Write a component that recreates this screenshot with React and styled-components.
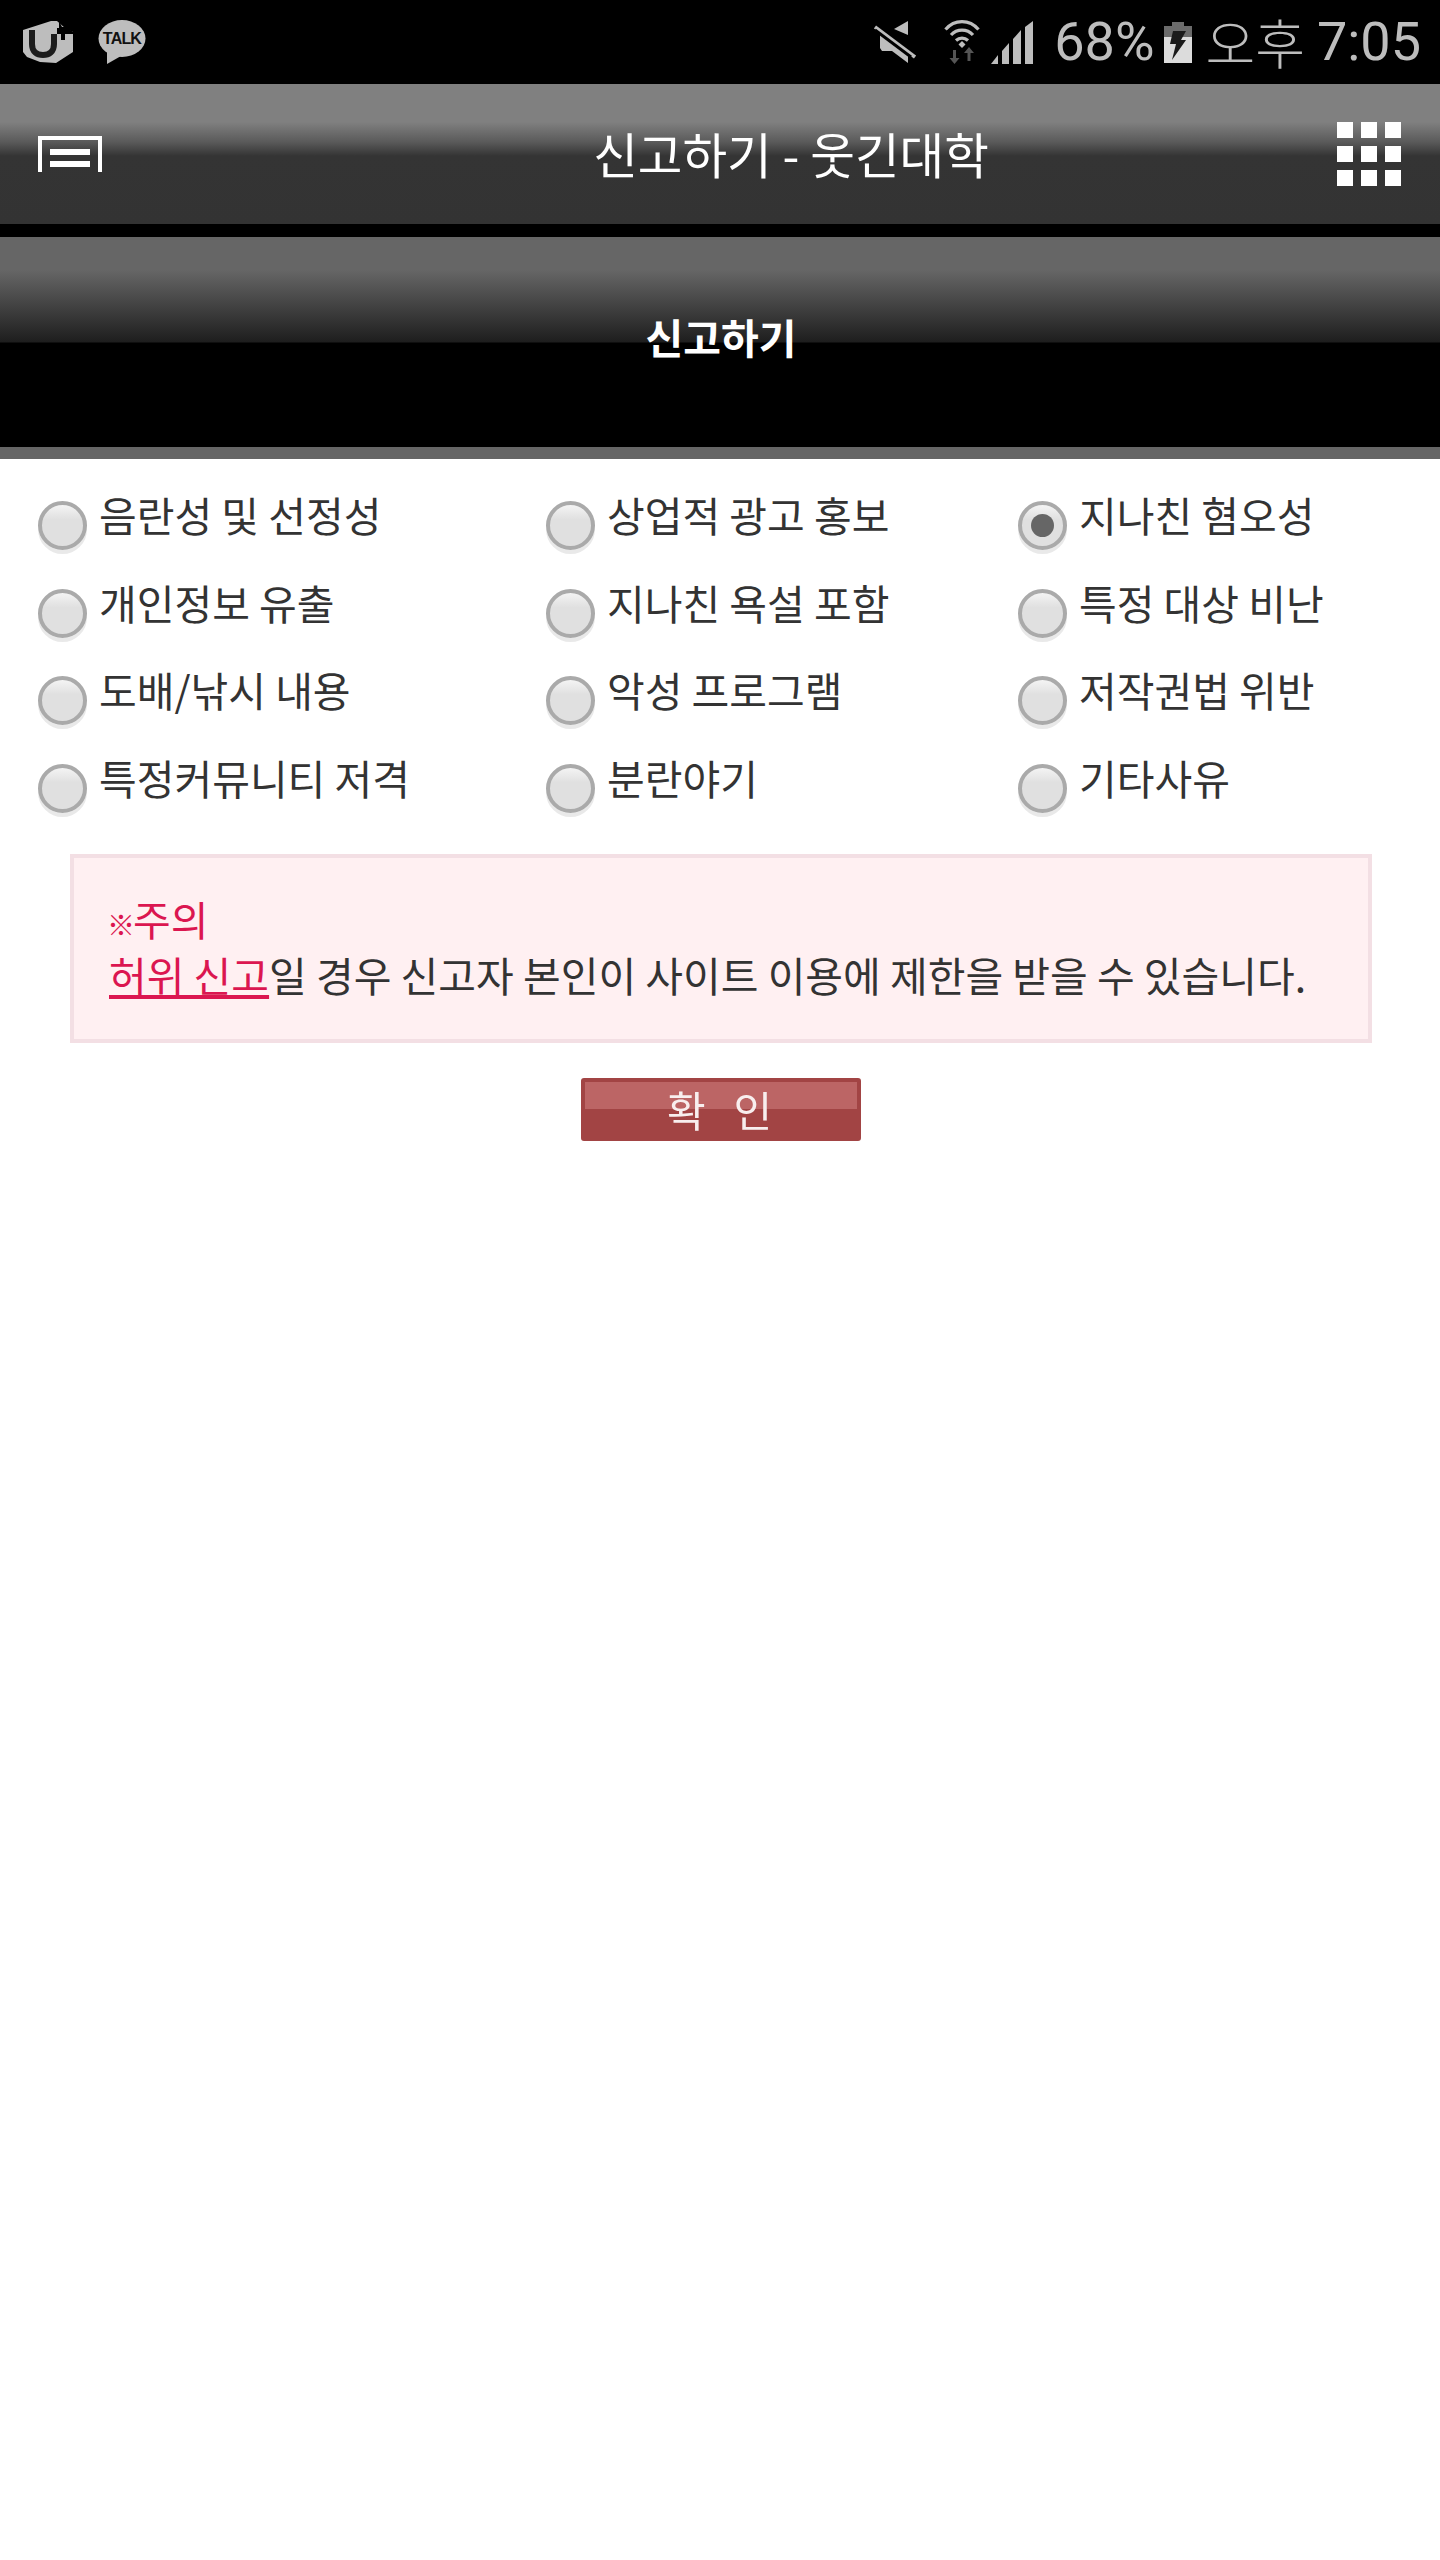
import React from 'react';
import styled, { createGlobalStyle } from 'styled-components';

const KR = `"Noto Sans CJK KR", "Noto Sans", sans-serif`;

const GlobalStyle = createGlobalStyle`
  html, body { margin: 0; padding: 0; background: #fff; }
  body { font-family: ${KR}; color: #333; }
`;

const Page = styled.div`
  width: 1440px;
  min-height: 2560px;
  background: #fff;
`;

const StatusBar = styled.div`
  height: 84px;
  background: #000;
  display: flex;
  align-items: center;
  justify-content: space-between;
  padding: 0 19px 0 23px;
  box-sizing: border-box;
  color: #bdbdbd;
`;

const StatusGroup = styled.div`
  display: flex;
  align-items: center;
  gap: ${props => props.gap || 0}px;
`;

const Spacer = styled.span`
  width: ${props => props.size}px;
`;

const StatusText = styled.span`
  font-family: ${props => (props.kr ? KR : 'Roboto, sans-serif')};
  font-weight: ${props => (props.kr ? 300 : 400)};
  font-size: 54px;
  line-height: 84px;
  margin-left: ${props => props.left || 0}px;
  white-space: nowrap;
`;

const TopBars = styled.div`
  background: #000;
`;

const AppHeader = styled.header`
  height: 140px;
  display: flex;
  align-items: center;
  padding: 0 39px 0 38px;
  box-sizing: border-box;
  background: linear-gradient(to bottom, #808080 0, #808080 38px, #5a5a5a 58px, #343434 72px, #333 140px);
`;

const HeaderTitle = styled.h1`
  flex: 1;
  margin: 0 0 2px;
  padding-left: 143px;
  text-align: center;
  color: #fff;
  font-size: 48.500px;
  font-weight: 400;
  line-height: 60px;
  white-space: nowrap;
`;

const GridIcon = styled.div`
  display: grid;
  grid-template-columns: repeat(3, 16px);
  grid-auto-rows: 16px;
  gap: 8px 8px;
`;

const GridDot = styled.span`
  background: #fff;
`;

const SubHeader = styled.div`
  margin-top: 13px;
  height: 222px;
  box-sizing: border-box;
  border-bottom: 12px solid #666;
  display: flex;
  align-items: center;
  justify-content: center;
  background: linear-gradient(to bottom, #666 0, #666 33px, #1e1e1e 105px, #000 106px, #000 100%);
`;

const SubTitle = styled.h2`
  margin: 0 0 12px 2px;
  color: #fff;
  font-size: 41px;
  font-weight: 700;
  line-height: 60px;
`;

const ReportForm = styled.form`
  margin: 0;
  padding: 42px 0 0 38px;
`;

const OptionGrid = styled.div`
  display: grid;
  grid-template-columns: 508px 472px 1fr;
  grid-auto-rows: 87.500px;
`;

const Option = styled.label`
  display: flex;
  align-items: flex-start;
  gap: 12px;
`;

const Radio = styled.span`
  flex: none;
  width: 49px;
  height: 49px;
  box-sizing: border-box;
  border: 4px solid #aaa;
  border-radius: 50%;
  display: flex;
  align-items: center;
  justify-content: center;
  background: linear-gradient(to bottom, #f4f4f4 0, #e0e0e0 35%, #e0e0e0 100%);
  box-shadow: 0 4px 0 #e9e9e9;
`;

const RadioDot = styled.span`
  width: 23px;
  height: 23px;
  border-radius: 50%;
  background: #666;
`;

const OptionLabel = styled.span`
  font-size: 41px;
  line-height: 50px;
  margin-top: -12px;
  color: #333;
  white-space: nowrap;
`;

const Notice = styled.div`
  margin: 3px 0 0 32px;
  width: 1302px;
  height: 189px;
  box-sizing: border-box;
  padding: 32px 35px 0;
  border: 4px solid #f3dfe4;
  background: #fff0f2;
  font-size: 41px;
  line-height: 56px;
  color: #333;
  white-space: nowrap;
`;

const Warning = styled.div`
  color: #db1650;
`;

const WarningMark = styled.span`
  font-size: 28px;
  font-weight: 700;
  line-height: 1;
  margin-left: -2px;
  margin-right: -2px;
`;

const Mark = styled.span`
  color: #db1650;
  text-decoration: underline;
  text-decoration-thickness: 4px;
  text-underline-offset: 3px;
`;

const ConfirmRow = styled.div`
  display: flex;
  justify-content: center;
  margin: 35px 0 0 -36px;
`;

const ConfirmButton = styled.button`
  width: 280px;
  height: 63px;
  padding: 0 0 2px;
  border: 4px solid #a24444;
  border-radius: 3px;
  box-sizing: border-box;
  background: linear-gradient(to bottom, #bc6565 0, #bc6565 27px, #a24444 27px, #a24444 100%);
  color: #f8eeee;
  font-family: ${KR};
  font-size: 42px;
  font-weight: 400;
  line-height: 50px;
  letter-spacing: 3px;
  white-space: pre;
`;

const ConfirmLabel = styled.span`
  filter: blur(0.6px);
`;

const MuteIcon = () => (
  <svg width="42" height="42" viewBox="0 0 42 42">
    <path d="M34 0v14L20 8z M6 14h6l22 20v8L18 30H8l-2-3z" fill="#bdbdbd" />
    <path d="M1 6l40 30" stroke="#bdbdbd" strokeWidth="3.500" />
    <path d="M1 9l36 27" stroke="#000" strokeWidth="3" />
  </svg>
);

const WifiIcon = () => (
  <svg width="36" height="44" viewBox="0 0 36 44">
    <g fill="none" stroke="#bdbdbd" strokeWidth="3.200">
      <path d="M1.500 9.500c9-10.500 24-10.500 33 0" />
      <path d="M7 15c6-6.500 16-6.500 22 0" />
      <path d="M12 20.500c3.500-3.300 8.500-3.300 12 0" />
    </g>
    <path d="M14.500 24.500l3.500-3.500 3.500 3.500-3.500 3.500z" fill="#bdbdbd" />
    <path d="M9 30v8H5.500l5 6 5-6H12v-8z" fill="#555" />
    <path d="M25 27l-5 6h3.500v8h3v-8H30z" fill="#555" />
  </svg>
);

const SignalIcon = () => (
  <svg width="43" height="43" viewBox="0 0 43 43" fill="#bdbdbd">
    <path d="M0 43l7-9v9z" />
    <path d="M11 43V30l7-8v21z" />
    <path d="M22 43V18l8-9v34z" />
    <path d="M34 43V6l8-6v43z" />
  </svg>
);

const BatteryIcon = () => (
  <svg width="28" height="41" viewBox="0 0 28 41">
    <path d="M8 0h12v4h8v37H0V4h8z" fill="#6b6b6b" />
    <path d="M0 15h28v26H0z" fill="#dcdcdc" />
    <path d="M9 9h13l-5 9h5L8 38l4-16H6z" fill="#1a1a1a" />
  </svg>
);

const UplusIcon = () => (
  <svg width="50" height="44" viewBox="0 0 50 44">
    <path d="M0 10L28 1h6l8 7 8 4v20L33 43l-16-1-13-5-4-5z" fill="#bdbdbd" />
    <path d="M9 10v14c0 8 5 11 11 11s11-3 11-11V14" fill="none" stroke="#1c1c1c" strokeWidth="6" />
    <path d="M36 1l3 6h3v-1l8 6v2h-8v6h-4v-6h-4V8h2z" fill="#000" />
  </svg>
);

const TalkIcon = () => (
  <svg width="48" height="44" viewBox="0 0 48 44">
    <ellipse cx="24" cy="18.500" rx="23.500" ry="18.500" fill="#bdbdbd" />
    <path d="M9 30l0 14 14-8z" fill="#bdbdbd" />
    <text x="24" y="24" textAnchor="middle" fontFamily="Liberation Sans, sans-serif" fontWeight="700" fontSize="16" letterSpacing="-0.800" fill="#111">TALK</text>
  </svg>
);

const MenuSvg = styled.svg`
  flex: none;
`;

const MenuIcon = () => (
  <MenuSvg width="64" height="36" viewBox="0 0 64 36" fill="#fff">
    <path d="M0 0h64v36h-4V4H4v32H0z" />
    <path d="M12 13h40v6H12zM12 25h40v6H12z" />
  </MenuSvg>
);

const OPTIONS = [
  '음란성 및 선정성', '상업적 광고 홍보', '지나친 혐오성',
  '개인정보 유출', '지나친 욕설 포함', '특정 대상 비난',
  '도배/낚시 내용', '악성 프로그램', '저작권법 위반',
  '특정커뮤니티 저격', '분란야기', '기타사유',
];

const App = () => (
  <Page>
    <GlobalStyle />
    <StatusBar>
      <StatusGroup gap={25}>
        <UplusIcon />
        <TalkIcon />
      </StatusGroup>
      <StatusGroup>
        <MuteIcon />
        <Spacer size={28} />
        <WifiIcon />
        <Spacer size={11} />
        <SignalIcon />
        <StatusText left={20}>68%</StatusText>
        <Spacer size={9} />
        <BatteryIcon />
        <StatusText kr left={14}>오후</StatusText>
        <StatusText left={12}>7:05</StatusText>
      </StatusGroup>
    </StatusBar>
    <TopBars>
      <AppHeader>
        <MenuIcon />
        <HeaderTitle>신고하기 - 웃긴대학</HeaderTitle>
        <GridIcon>
          {Array.from({ length: 9 }).map((_, i) => <GridDot key={i} />)}
        </GridIcon>
      </AppHeader>
      <SubHeader>
        <SubTitle>신고하기</SubTitle>
      </SubHeader>
    </TopBars>
    <ReportForm>
      <OptionGrid>
        {OPTIONS.map((label, i) => (
          <Option key={label}>
            <Radio>{i === 2 && <RadioDot />}</Radio>
            <OptionLabel>{label}</OptionLabel>
          </Option>
        ))}
      </OptionGrid>
      <Notice>
        <Warning><WarningMark>※</WarningMark>주의</Warning>
        <Mark>허위 신고</Mark>일 경우 신고자 본인이 사이트 이용에 제한을 받을 수 있습니다.
      </Notice>
      <ConfirmRow>
        <ConfirmButton type="button"><ConfirmLabel>확  인</ConfirmLabel></ConfirmButton>
      </ConfirmRow>
    </ReportForm>
  </Page>
);

export default App;
